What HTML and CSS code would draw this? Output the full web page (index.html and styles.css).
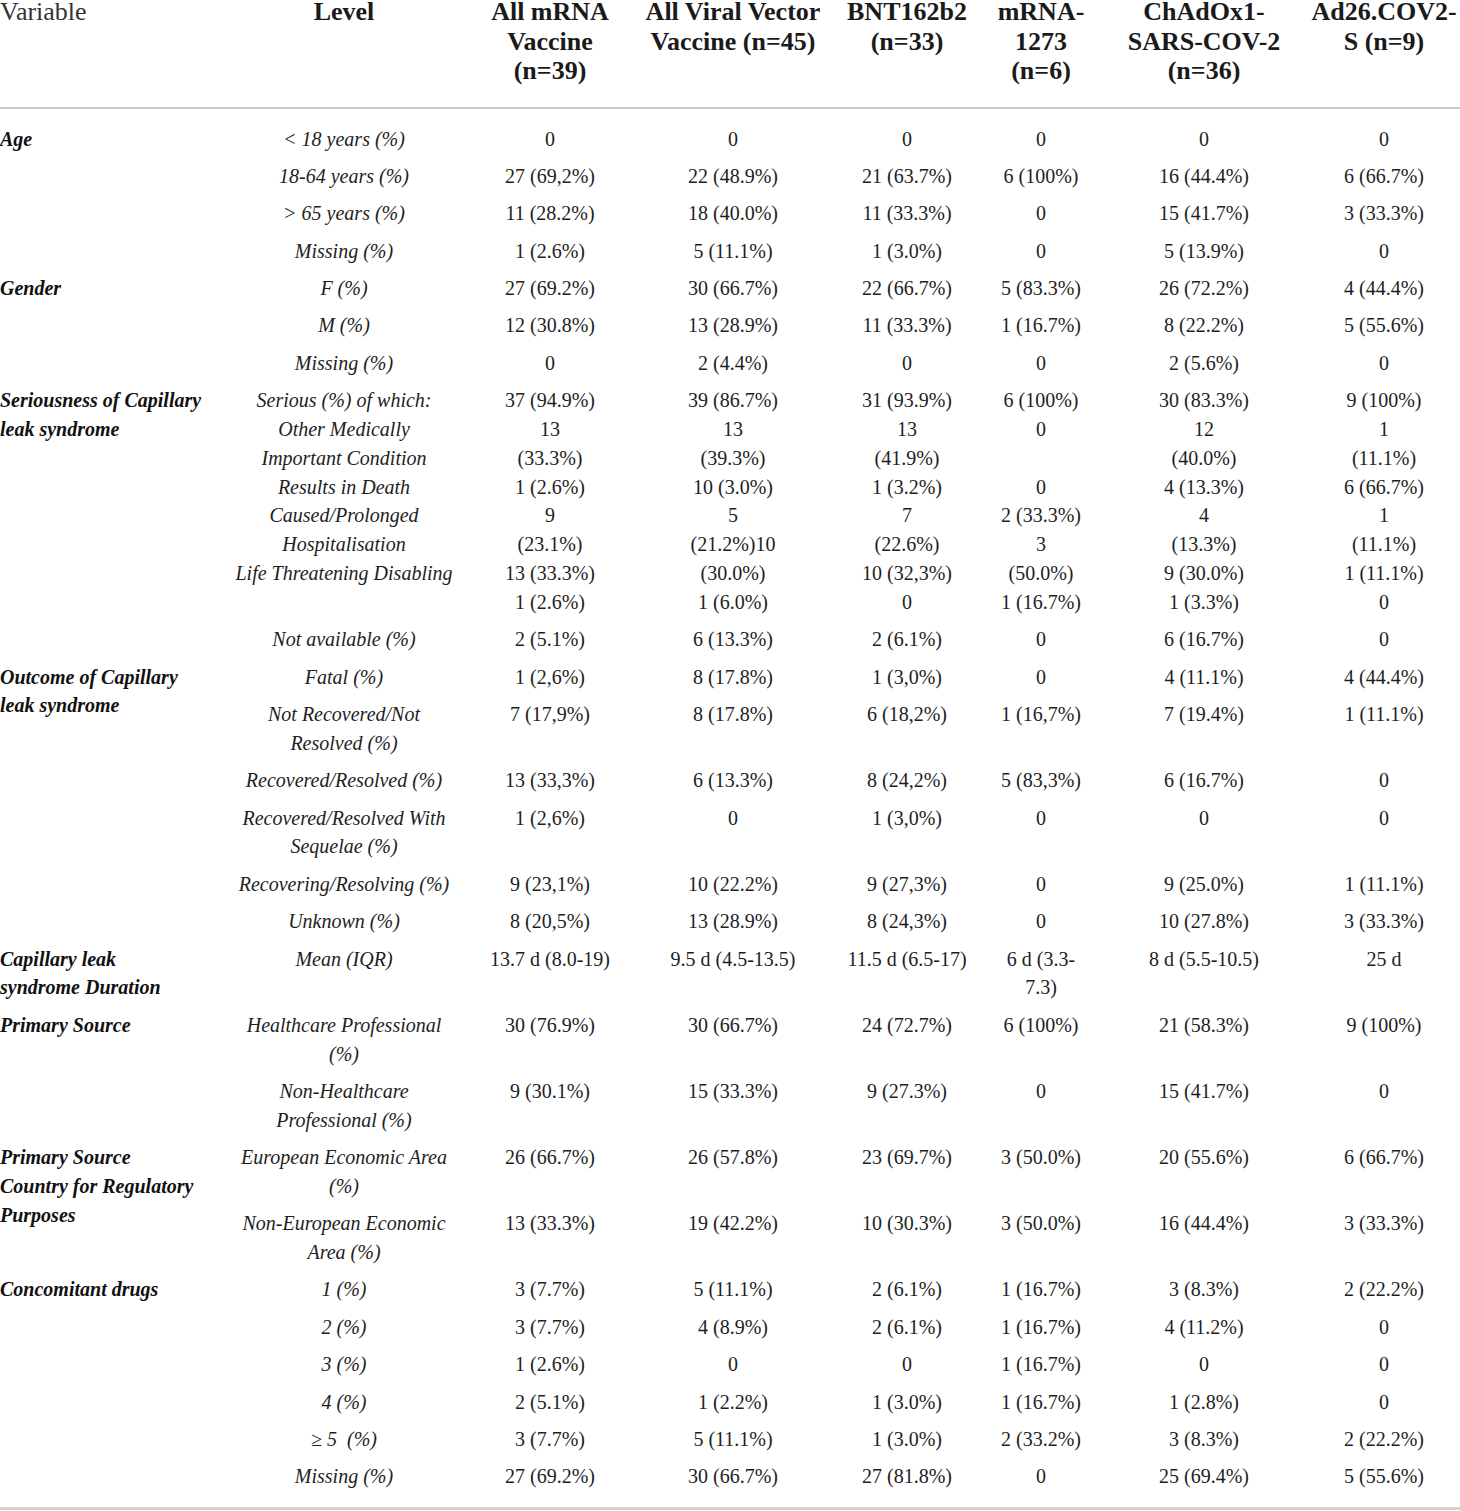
FILE: index.html
```html
<!DOCTYPE html>
<html lang="en">
<head>
    <meta charset="UTF-8">
    <title>Capillary leak syndrome by vaccine</title>
    <link rel="stylesheet" href="styles.css">
</head>
<body>
    <table class="data">
        <colgroup>
            <col class="c-var">
            <col class="c-level">
            <col class="c-mrna">
            <col class="c-viral">
            <col class="c-bnt">
            <col class="c-1273">
            <col class="c-chad">
            <col class="c-ad26">
        </colgroup>
        <thead>
            <tr>
                <th class="var">Variable</th>
                <th>Level</th>
                <th>All mRNA<br>Vaccine<br>(n=39)</th>
                <th>All Viral Vector<br>Vaccine (n=45)</th>
                <th>BNT162b2<br>(n=33)</th>
                <th>mRNA-<br>1273<br>(n=6)</th>
                <th>ChAdOx1-<br>SARS-COV-2<br>(n=36)</th>
                <th>Ad26.COV2-<br>S (n=9)</th>
            </tr>
        </thead>
        <tbody>
            <!-- Age -->
            <tr>
                <td class="var" rowspan="4">Age</td>
                <td class="level">&lt; 18 years (%)</td>
                <td>0</td><td>0</td><td>0</td><td>0</td><td>0</td><td>0</td>
            </tr>
            <tr>
                <td class="level">18-64 years (%)</td>
                <td>27 (69,2%)</td><td>22 (48.9%)</td><td>21 (63.7%)</td><td>6 (100%)</td><td>16 (44.4%)</td><td>6 (66.7%)</td>
            </tr>
            <tr>
                <td class="level">&gt; 65 years (%)</td>
                <td>11 (28.2%)</td><td>18 (40.0%)</td><td>11 (33.3%)</td><td>0</td><td>15 (41.7%)</td><td>3 (33.3%)</td>
            </tr>
            <tr>
                <td class="level">Missing (%)</td>
                <td>1 (2.6%)</td><td>5 (11.1%)</td><td>1 (3.0%)</td><td>0</td><td>5 (13.9%)</td><td>0</td>
            </tr>
            <!-- Gender -->
            <tr>
                <td class="var" rowspan="3">Gender</td>
                <td class="level">F (%)</td>
                <td>27 (69.2%)</td><td>30 (66.7%)</td><td>22 (66.7%)</td><td>5 (83.3%)</td><td>26 (72.2%)</td><td>4 (44.4%)</td>
            </tr>
            <tr>
                <td class="level">M (%)</td>
                <td>12 (30.8%)</td><td>13 (28.9%)</td><td>11 (33.3%)</td><td>1 (16.7%)</td><td>8 (22.2%)</td><td>5 (55.6%)</td>
            </tr>
            <tr>
                <td class="level">Missing (%)</td>
                <td>0</td><td>2 (4.4%)</td><td>0</td><td>0</td><td>2 (5.6%)</td><td>0</td>
            </tr>
            <!-- Seriousness -->
            <tr>
                <td class="var" rowspan="2">Seriousness of Capillary<br>leak syndrome</td>
                <td class="level">Serious (%) of which:<br>Other Medically<br>Important Condition<br>Results in Death<br>Caused/Prolonged<br>Hospitalisation<br>Life Threatening Disabling<br>&nbsp;</td>
                <td>37 (94.9%)<br>13<br>(33.3%)<br>1 (2.6%)<br>9<br>(23.1%)<br>13 (33.3%)<br>1 (2.6%)</td>
                <td>39 (86.7%)<br>13<br>(39.3%)<br>10 (3.0%)<br>5<br>(21.2%)10<br>(30.0%)<br>1 (6.0%)</td>
                <td>31 (93.9%)<br>13<br>(41.9%)<br>1 (3.2%)<br>7<br>(22.6%)<br>10 (32,3%)<br>0</td>
                <td>6 (100%)<br>0<br>&nbsp;<br>0<br>2 (33.3%)<br>3<br>(50.0%)<br>1 (16.7%)</td>
                <td>30 (83.3%)<br>12<br>(40.0%)<br>4 (13.3%)<br>4<br>(13.3%)<br>9 (30.0%)<br>1 (3.3%)</td>
                <td>9 (100%)<br>1<br>(11.1%)<br>6 (66.7%)<br>1<br>(11.1%)<br>1 (11.1%)<br>0</td>
            </tr>
            <tr>
                <td class="level">Not available (%)</td>
                <td>2 (5.1%)</td><td>6 (13.3%)</td><td>2 (6.1%)</td><td>0</td><td>6 (16.7%)</td><td>0</td>
            </tr>
            <!-- Outcome -->
            <tr>
                <td class="var" rowspan="6">Outcome of Capillary<br>leak syndrome</td>
                <td class="level">Fatal (%)</td>
                <td>1 (2,6%)</td><td>8 (17.8%)</td><td>1 (3,0%)</td><td>0</td><td>4 (11.1%)</td><td>4 (44.4%)</td>
            </tr>
            <tr>
                <td class="level">Not Recovered/Not<br>Resolved (%)</td>
                <td>7 (17,9%)</td><td>8 (17.8%)</td><td>6 (18,2%)</td><td>1 (16,7%)</td><td>7 (19.4%)</td><td>1 (11.1%)</td>
            </tr>
            <tr>
                <td class="level">Recovered/Resolved (%)</td>
                <td>13 (33,3%)</td><td>6 (13.3%)</td><td>8 (24,2%)</td><td>5 (83,3%)</td><td>6 (16.7%)</td><td>0</td>
            </tr>
            <tr>
                <td class="level">Recovered/Resolved With<br>Sequelae (%)</td>
                <td>1 (2,6%)</td><td>0</td><td>1 (3,0%)</td><td>0</td><td>0</td><td>0</td>
            </tr>
            <tr>
                <td class="level">Recovering/Resolving (%)</td>
                <td>9 (23,1%)</td><td>10 (22.2%)</td><td>9 (27,3%)</td><td>0</td><td>9 (25.0%)</td><td>1 (11.1%)</td>
            </tr>
            <tr>
                <td class="level">Unknown (%)</td>
                <td>8 (20,5%)</td><td>13 (28.9%)</td><td>8 (24,3%)</td><td>0</td><td>10 (27.8%)</td><td>3 (33.3%)</td>
            </tr>
            <!-- Duration -->
            <tr>
                <td class="var">Capillary leak<br>syndrome Duration</td>
                <td class="level">Mean (IQR)</td>
                <td>13.7 d (8.0-19)</td><td>9.5 d (4.5-13.5)</td><td>11.5 d (6.5-17)</td><td>6 d (3.3-<br>7.3)</td><td>8 d (5.5-10.5)</td><td>25 d</td>
            </tr>
            <!-- Primary source -->
            <tr>
                <td class="var" rowspan="2">Primary Source</td>
                <td class="level">Healthcare Professional<br>(%)</td>
                <td>30 (76.9%)</td><td>30 (66.7%)</td><td>24 (72.7%)</td><td>6 (100%)</td><td>21 (58.3%)</td><td>9 (100%)</td>
            </tr>
            <tr>
                <td class="level">Non-Healthcare<br>Professional (%)</td>
                <td>9 (30.1%)</td><td>15 (33.3%)</td><td>9 (27.3%)</td><td>0</td><td>15 (41.7%)</td><td>0</td>
            </tr>
            <!-- Country -->
            <tr>
                <td class="var" rowspan="2">Primary Source<br>Country for Regulatory<br>Purposes</td>
                <td class="level">European Economic Area<br>(%)</td>
                <td>26 (66.7%)</td><td>26 (57.8%)</td><td>23 (69.7%)</td><td>3 (50.0%)</td><td>20 (55.6%)</td><td>6 (66.7%)</td>
            </tr>
            <tr>
                <td class="level">Non-European Economic<br>Area (%)</td>
                <td>13 (33.3%)</td><td>19 (42.2%)</td><td>10 (30.3%)</td><td>3 (50.0%)</td><td>16 (44.4%)</td><td>3 (33.3%)</td>
            </tr>
            <!-- Concomitant drugs -->
            <tr>
                <td class="var" rowspan="6">Concomitant drugs</td>
                <td class="level">1 (%)</td>
                <td>3 (7.7%)</td><td>5 (11.1%)</td><td>2 (6.1%)</td><td>1 (16.7%)</td><td>3 (8.3%)</td><td>2 (22.2%)</td>
            </tr>
            <tr>
                <td class="level">2 (%)</td>
                <td>3 (7.7%)</td><td>4 (8.9%)</td><td>2 (6.1%)</td><td>1 (16.7%)</td><td>4 (11.2%)</td><td>0</td>
            </tr>
            <tr>
                <td class="level">3 (%)</td>
                <td>1 (2.6%)</td><td>0</td><td>0</td><td>1 (16.7%)</td><td>0</td><td>0</td>
            </tr>
            <tr>
                <td class="level">4 (%)</td>
                <td>2 (5.1%)</td><td>1 (2.2%)</td><td>1 (3.0%)</td><td>1 (16.7%)</td><td>1 (2.8%)</td><td>0</td>
            </tr>
            <tr>
                <td class="level">&ge; 5&nbsp; (%)</td>
                <td>3 (7.7%)</td><td>5 (11.1%)</td><td>1 (3.0%)</td><td>2 (33.2%)</td><td>3 (8.3%)</td><td>2 (22.2%)</td>
            </tr>
            <tr>
                <td class="level">Missing (%)</td>
                <td>27 (69.2%)</td><td>30 (66.7%)</td><td>27 (81.8%)</td><td>0</td><td>25 (69.4%)</td><td>5 (55.6%)</td>
            </tr>
        </tbody>
    </table>
</body>
</html>
```

FILE: styles.css
```css
body {
    margin: 0;
    padding: 0;
    background: #fff;
    color: #1e1e1e;
    font-family: "Liberation Serif", "Times New Roman", serif;
}
.data {
    width: 1460px;
    margin-top: -3px;
    table-layout: fixed;
    border-collapse: collapse;
    border-bottom: 3px solid #d3d3d3;
}
.c-var   { width: 222px; }
.c-level { width: 244px; }
.c-mrna  { width: 168px; }
.c-viral { width: 198px; }
.c-bnt   { width: 150px; }
.c-1273  { width: 118px; }
.c-chad  { width: 208px; }
.c-ad26  { width: 152px; }

.data thead tr {
    border-bottom: 2px solid #c9c9c9;
}
.data th {
    font-size: 26px;
    line-height: 29.5px;
    font-weight: bold;
    text-align: center;
    vertical-align: top;
    white-space: nowrap;
    padding: 0 0 21px;
    color: #1a1a1a;
}
.data th.var {
    font-weight: normal;
    text-align: left;
    color: #333;
}
.data td {
    font-size: 20px;
    line-height: 28.8px;
    text-align: center;
    vertical-align: top;
    white-space: nowrap;
    padding: 4.3px 0;
}
.data td.var {
    text-align: left;
    font-weight: bold;
    font-style: italic;
    color: #111;
}
.data td.level {
    font-style: italic;
}
.data tbody tr:first-child td {
    padding-top: 16px;
}
.data tbody tr:last-child td {
    padding-bottom: 16px;
}
```
